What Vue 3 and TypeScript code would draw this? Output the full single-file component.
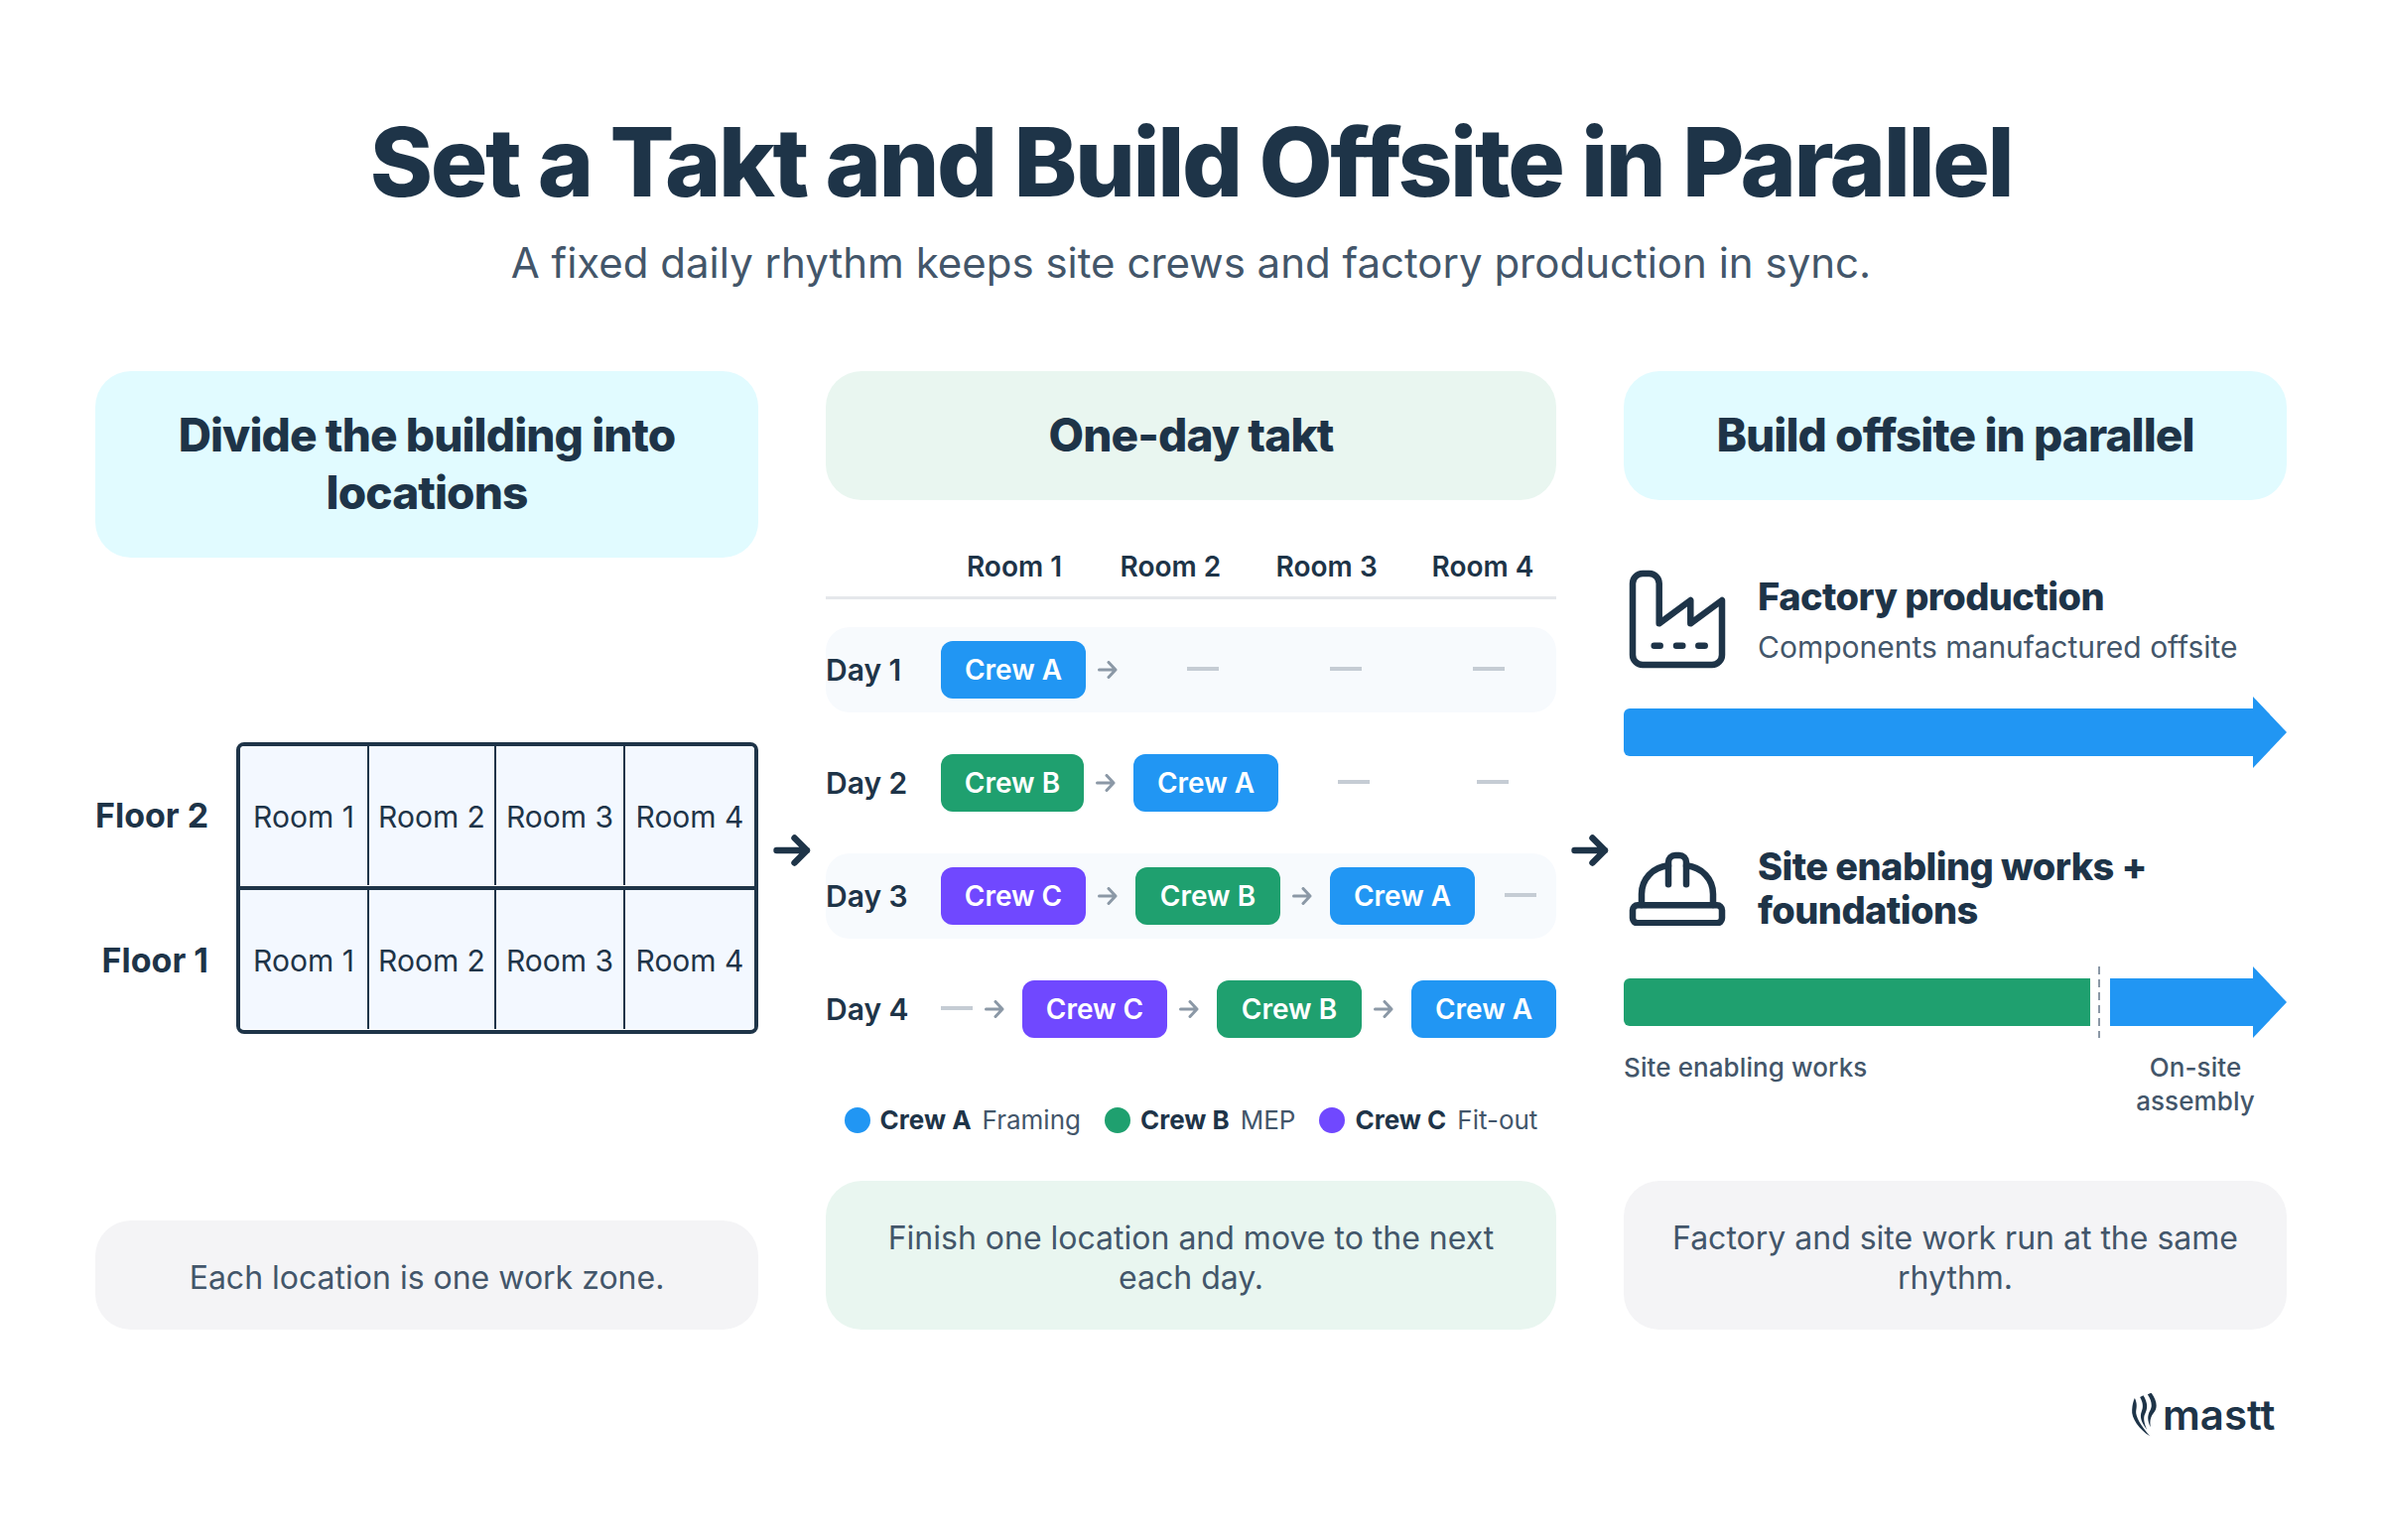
<script setup lang="ts">
type Crew = 'a' | 'b' | 'c'

interface Step {
  kind: 'chip' | 'arrow' | 'dash'
  crew?: Crew
  narrow?: boolean
}

interface DayRow {
  day: string
  steps: Step[]
  tail: number
  tailClass?: string
  shaded: boolean
}

const crewNames: Record<Crew, string> = { a: 'Crew A', b: 'Crew B', c: 'Crew C' }
const rooms = ['Room 1', 'Room 2', 'Room 3', 'Room 4']
const floors = ['Floor 2', 'Floor 1']

const chip = (crew: Crew, narrow = false): Step => ({ kind: 'chip', crew, narrow })
const arrow: Step = { kind: 'arrow' }
const dash: Step = { kind: 'dash' }

const days: DayRow[] = [
  { day: 'Day 1', steps: [chip('a'), arrow], tail: 3, tailClass: 'tail-1', shaded: true },
  { day: 'Day 2', steps: [chip('b', true), arrow, chip('a')], tail: 2, tailClass: 'tail-2', shaded: false },
  { day: 'Day 3', steps: [chip('c'), arrow, chip('b'), arrow, chip('a')], tail: 1, tailClass: 'tail-3', shaded: true },
  { day: 'Day 4', steps: [dash, arrow, chip('c'), arrow, chip('b'), arrow, chip('a')], tail: 0, shaded: false },
]

const legend: { crew: Crew; note: string }[] = [
  { crew: 'a', note: 'Framing' },
  { crew: 'b', note: 'MEP' },
  { crew: 'c', note: 'Fit-out' },
]
</script>

<template>
  <div class="page">
    <header class="intro">
      <h1>Set a Takt and Build Offsite in Parallel</h1>
      <p>A fixed daily rhythm keeps site crews and factory production in sync.</p>
    </header>

    <main class="board">
      <section class="col">
        <h2 class="head cyan">Divide the building into locations</h2>
        <div class="mid mid-center">
          <div class="floor-labels">
            <div v-for="floor in floors" :key="floor" class="floor-label">{{ floor }}</div>
          </div>
          <div class="plan">
            <div v-for="floor in floors" :key="floor" class="plan-row">
              <div v-for="room in rooms" :key="room" class="plan-cell">{{ room }}</div>
            </div>
          </div>
        </div>
        <p class="foot grey">Each location is one work zone.</p>
      </section>

      <svg class="link" width="38" height="32" viewBox="0 0 38 32" fill="none">
        <path d="M3.5 16H34M21.5 3.5 34 16 21.5 28.5" stroke="#1e3448" stroke-width="6.4" stroke-linecap="round" stroke-linejoin="round" />
      </svg>

      <section class="col">
        <h2 class="head mint">One-day takt</h2>
        <div class="mid mid-takt">
          <div class="takt-head">
            <span v-for="room in rooms" :key="room">{{ room }}</span>
          </div>
          <div class="takt-rows">
            <div v-for="row in days" :key="row.day" class="takt-row" :class="{ shaded: row.shaded }">
              <span class="day">{{ row.day }}</span>
              <template v-for="(step, i) in row.steps" :key="i">
                <span v-if="step.kind === 'chip'" class="chip" :class="[step.crew, { narrow: step.narrow }]">{{ crewNames[step.crew!] }}</span>
                <svg v-else-if="step.kind === 'arrow'" class="step-arrow" width="20" height="18" viewBox="0 0 20 18" fill="none">
                  <path d="M1.5 9H18M11 1.5 18 9 11 16.5" stroke="#8b98a6" stroke-width="3" stroke-linecap="round" stroke-linejoin="round" />
                </svg>
                <span v-else class="dash"></span>
              </template>
              <div v-if="row.tail" class="tail" :class="row.tailClass">
                <span v-for="n in row.tail" :key="n" class="dash"></span>
              </div>
            </div>
          </div>
          <div class="legend">
            <div v-for="item in legend" :key="item.crew" class="legend-item">
              <i class="dot" :class="item.crew"></i>
              <b>{{ crewNames[item.crew] }}</b>
              <span>{{ item.note }}</span>
            </div>
          </div>
        </div>
        <p class="foot mint">Finish one location and move to the next each day.</p>
      </section>

      <svg class="link" width="38" height="32" viewBox="0 0 38 32" fill="none">
        <path d="M3.5 16H34M21.5 3.5 34 16 21.5 28.5" stroke="#1e3448" stroke-width="6.4" stroke-linecap="round" stroke-linejoin="round" />
      </svg>

      <section class="col">
        <h2 class="head cyan">Build offsite in parallel</h2>
        <div class="mid mid-build">
          <div class="track-title factory">
            <svg width="98" height="100" viewBox="0 0 98 100" fill="none" stroke="#1e3448" stroke-width="6.5" stroke-linecap="round" stroke-linejoin="round">
              <path d="M4 14a10 10 0 0 1 10-10h6.7a10 10 0 0 1 10 10V54.3L62.3 31V54.3L94 31V86a10 10 0 0 1-10 10H14A10 10 0 0 1 4 86Z" />
              <path d="M25.7 76.7h6M48 76.7h6.3M70.3 76.7h6.4" />
            </svg>
            <div>
              <h3>Factory production</h3>
              <p>Components manufactured offsite</p>
            </div>
          </div>
          <div class="bar first-bar">
            <div class="bar-body blue rounded"></div>
            <div class="bar-head"></div>
          </div>

          <div class="track-title site">
            <svg width="98" height="76" viewBox="0 0 98 76" fill="none" stroke="#1e3448" stroke-width="6.5" stroke-linecap="round" stroke-linejoin="round">
              <rect x="4" y="55.3" width="90" height="18" rx="5" />
              <path d="M13 55V44C13 29 24 17 40 15.3M85 55V44C85 29 74 17 58 15.3" />
              <path d="M40 34.3V12a7 7 0 0 1 7-7h4a7 7 0 0 1 7 7V34.3" />
            </svg>
            <h3>Site enabling works + foundations</h3>
          </div>
          <div class="bar second-bar">
            <div class="bar-body green rounded short"></div>
            <div class="split"></div>
            <div class="bar-body blue"></div>
            <div class="bar-head"></div>
          </div>
          <div class="bar-labels">
            <span>Site enabling works</span>
            <span class="onsite">On-site assembly</span>
          </div>
        </div>
        <p class="foot grey">Factory and site work run at the same rhythm.</p>
      </section>
    </main>

    <div class="brand">
      <svg width="27" height="44" viewBox="140 75 80 132" fill="#1e3448">
        <path d="M151 90C159 105 157 118 155 130 153 145 170 175 197 205 165 185 140 150 143 125 144 110 147 98 151 90Z" />
        <path d="M167 87 177 82C191 105 191 122 181 140 177 150 179 165 188 185 172 165 165 148 172 130 177 118 177 105 167 87Z" />
        <path d="M190 79 201 74C218 98 222 118 208 135 198 148 196 160 199 178 190 160 188 145 197 128 205 115 203 100 190 79Z" />
      </svg>
      <span>mastt</span>
    </div>
  </div>
</template>

<style scoped>
.page {
  width: 2400px;
  height: 1552px;
  box-sizing: border-box;
  padding: 0 96px;
  background: #fff;
  color: #1e3448;
  font-family: Inter, "Noto Sans", sans-serif;
  overflow: hidden;
}

.intro {
  height: 374px;
  padding-top: 105px;
  box-sizing: border-box;
  text-align: center;
}

.intro h1 {
  margin: 0;
  font-size: 96px;
  line-height: 116px;
  font-weight: 800;
  letter-spacing: -2.4px;
}

.intro p {
  margin: 17px 0 0;
  font-size: 42px;
  line-height: 54px;
  color: #43566a;
}

.board {
  display: grid;
  grid-template-columns: 668px 68px 736px 68px 668px;
  height: 966px;
}

.col {
  display: flex;
  flex-direction: column;
  min-height: 0;
}

.link {
  align-self: center;
  justify-self: center;
}

.head {
  margin: 0;
  padding: 35px 40px 37px;
  border-radius: 36px;
  text-align: center;
  font-size: 46px;
  line-height: 58px;
  font-weight: 800;
  letter-spacing: -0.02em;
}

.foot {
  margin: 0;
  padding: 38px 36px 32px;
  border-radius: 36px;
  text-align: center;
  font-size: 32px;
  line-height: 40px;
  color: #43566a;
}

.cyan { background: #e1fbff; }
.mint { background: #e9f6f0; }
.grey { background: #f4f4f6; }

.mid {
  flex: 1;
  min-height: 0;
}

/* locations */
.mid-center {
  display: flex;
  align-items: center;
  gap: 28px;
  padding-bottom: 2px;
}

.floor-labels {
  width: 114px;
  text-align: right;
}

.floor-label {
  height: 146px;
  line-height: 146px;
  font-size: 34px;
  font-weight: 700;
  white-space: nowrap;
}

.plan {
  width: 526px;
  box-sizing: border-box;
  border: 4px solid #1e3448;
  border-radius: 8px;
  overflow: hidden;
}

.plan-row {
  display: grid;
  grid-template-columns: 130px 128px 130px 130px;
  height: 141px;
}

.plan-row + .plan-row {
  border-top: 4px solid #1e3448;
}

.plan-cell {
  display: flex;
  align-items: center;
  justify-content: center;
  margin-bottom: 1px;
  padding-top: 2px;
  background: #f3f8ff;
  border-right: 2px solid #1e3448;
  font-size: 30px;
}

.plan-cell:last-child {
  border-right: 0;
}

/* takt */
.mid-takt {
  padding-top: 49px;
}

.takt-head {
  display: flex;
  justify-content: space-between;
  padding: 0 0 12px 116px;
  border-bottom: 3px solid #e5e7eb;
  font-size: 28px;
  line-height: 36px;
  font-weight: 600;
}

.takt-head span {
  width: 148px;
  text-align: center;
}

.takt-rows {
  display: flex;
  flex-direction: column;
  gap: 28px;
  padding-top: 28px;
}

.takt-row {
  display: flex;
  align-items: center;
  height: 86px;
  border-radius: 24px;
}

.takt-row.shaded {
  background: #f7fafd;
}

.day {
  width: 116px;
  flex: none;
  font-size: 30px;
  font-weight: 600;
}

.chip {
  flex: none;
  width: 146px;
  height: 58px;
  line-height: 58px;
  border-radius: 12px;
  text-align: center;
  color: #fff;
  font-size: 28px;
  font-weight: 600;
}

.chip.narrow {
  width: 144px;
}

.a { background: #2196f3; }
.b { background: #1fa06f; }
.c { background: #7048ff; }

.step-arrow {
  flex: none;
  margin: 0 18px 0 12px;
}

.dash {
  flex: none;
  width: 32px;
  height: 4px;
  margin-top: -2px;
  background: #c5ccd4;
}

.tail {
  flex: 1;
  display: flex;
  justify-content: space-between;
}

.tail-1 { padding: 0 52px 0 52px; }
.tail-2 { padding: 0 48px 0 60px; }
.tail-3 { padding: 0 20px 0 30px; }

.legend {
  display: flex;
  justify-content: center;
  gap: 24px;
  margin-top: 51px;
  line-height: 36px;
  font-size: 26px;
}

.legend-item {
  display: flex;
  align-items: center;
  gap: 10px;
}

.legend-item b {
  font-weight: 700;
}

.legend-item span {
  margin-left: 1px;
  color: #43566a;
}

.dot {
  width: 26px;
  height: 26px;
  border-radius: 50%;
}

/* offsite */
.mid-build {
  padding-top: 70px;
}

.track-title {
  display: flex;
  padding-left: 5px;
  gap: 32px;
}

.track-title svg {
  flex: none;
}

.track-title h3 {
  margin: 0;
  font-size: 38px;
  line-height: 44px;
  font-weight: 800;
  letter-spacing: -0.015em;
}

.track-title p {
  margin: 9px 0 0;
  font-size: 30px;
  line-height: 40px;
  color: #43566a;
}

.factory > div {
  padding-top: 5px;
}

.site {
  align-items: center;
  margin-top: 77px;
}

.bar {
  display: flex;
  align-items: center;
  height: 72px;
}

.first-bar {
  margin-top: 28px;
}

.second-bar {
  margin-top: 35px;
}

.bar-body {
  flex: 1;
  height: 48px;
}

.bar-body.blue { background: #2196f3; }
.bar-body.green { background: #1fa06f; }

.bar-body.rounded {
  border-radius: 6px 0 0 6px;
}

.bar-body.short {
  flex: none;
  width: 470px;
}

.split {
  width: 2px;
  height: 72px;
  margin: 0 10px 0 8px;
  background: repeating-linear-gradient(#8b98a6 0 8px, transparent 8px 13px);
}

.bar-head {
  width: 0;
  height: 0;
  border-top: 36px solid transparent;
  border-bottom: 36px solid transparent;
  border-left: 34px solid #2196f3;
}

.bar-labels {
  display: flex;
  justify-content: space-between;
  margin-top: 13px;
  font-size: 26px;
  line-height: 34px;
  font-weight: 500;
  letter-spacing: 0.1px;
  color: #43566a;
}

.onsite {
  width: 172px;
  margin-right: 6px;
  text-align: center;
}

.brand {
  position: absolute;
  left: 2147px;
  top: 1404px;
  display: flex;
  align-items: center;
  gap: 5px;
  font-size: 42px;
  line-height: 44px;
  font-weight: 600;
}
</style>

<style>
body {
  margin: 0;
  background: #fff;
}
</style>
